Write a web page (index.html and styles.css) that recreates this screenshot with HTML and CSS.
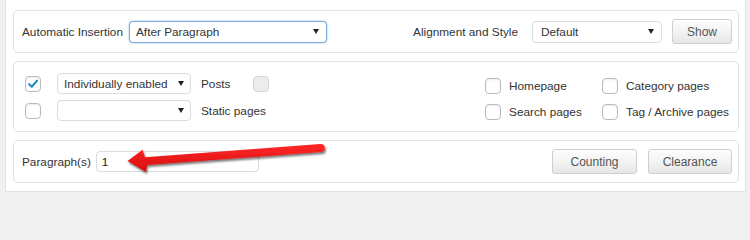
FILE: index.html
```html
<!DOCTYPE html>
<html>
<head>
<meta charset="utf-8">
<link rel="stylesheet" href="styles.css">
</head>
<body>
<div class="panel">
  <div class="box box-top">
    <div class="group">
      <span class="label">Automatic Insertion</span>
      <div class="select select-focus select-insert"><span>After Paragraph</span><i class="caret"></i></div>
    </div>
    <div class="group">
      <span class="label">Alignment and Style</span>
      <div class="select select-align"><span>Default</span><i class="caret"></i></div>
      <button class="btn btn-show">Show</button>
    </div>
  </div>

  <div class="box box-mid">
    <div class="left-rows">
      <div class="row">
        <span class="check checked"><svg viewBox="0 0 16 16" width="16" height="16"><path d="M3.6 8.2 L6.6 11.2 L12.6 4.2" fill="none" stroke="#1e8cbe" stroke-width="2.4" stroke-linecap="round" stroke-linejoin="round"/></svg></span>
        <div class="select select-type"><span>Individually enabled</span><i class="caret"></i></div>
        <span class="label row-label">Posts</span>
        <span class="check disabled"></span>
      </div>
      <div class="row">
        <span class="check"></span>
        <div class="select select-type"><span></span><i class="caret"></i></div>
        <span class="label row-label">Static pages</span>
      </div>
    </div>
    <div class="right-grid">
      <label class="opt"><span class="check"></span><span class="label">Homepage</span></label>
      <label class="opt"><span class="check"></span><span class="label">Category pages</span></label>
      <label class="opt"><span class="check"></span><span class="label">Search pages</span></label>
      <label class="opt"><span class="check"></span><span class="label">Tag / Archive pages</span></label>
    </div>
  </div>

  <div class="box box-bottom">
    <div class="group">
      <span class="label">Paragraph(s)</span>
      <div class="input">1</div>
    </div>
    <div class="group">
      <button class="btn btn-count">Counting</button>
      <button class="btn btn-clear">Clearance</button>
    </div>
  </div>
</div>

<svg class="red-arrow" viewBox="120 138 215 42" width="215" height="42">
  <defs>
    <linearGradient id="rg" x1="0" y1="0" x2="0" y2="1">
      <stop offset="0" stop-color="#ff2a2a"/>
      <stop offset="1" stop-color="#d60c0c"/>
    </linearGradient>
    <filter id="sh" x="-10%" y="-40%" width="120%" height="180%">
      <feDropShadow dx="1" dy="2" stdDeviation="1.3" flood-color="#000" flood-opacity="0.55"/>
    </filter>
  </defs>
  <path d="M127.5 161 L142.5 149.8 L145 157.3 L320 144 A4 4 0 0 1 321.5 152 L147 165 L146 172 Z" fill="url(#rg)" filter="url(#sh)"/>
</svg>
</body>
</html>
```

FILE: styles.css
```css
* { box-sizing: border-box; }

body {
  margin: 0;
  background: #f1f1f1;
  font-family: "Liberation Sans", Arial, sans-serif;
  font-size: 11.8px;
  color: #333;
  position: relative;
  width: 750px;
  height: 203px;
  overflow: hidden;
}

.panel {
  margin: 0 4px 0 5px;
  background: #fff;
  border: 1px solid #e3e3e3;
  border-top: none;
  padding: 10px 6px 8px 7px;
  display: flex;
  flex-direction: column;
  gap: 8px;
}

.box {
  border: 1px solid #e2e2e2;
  border-radius: 5px;
  background: #fff;
}

.box-top,
.box-bottom {
  height: 43px;
  display: flex;
  align-items: center;
  justify-content: space-between;
  padding: 0 6px 0 8px;
}

.group {
  display: flex;
  align-items: center;
}

.label {
  white-space: nowrap;
  color: #333;
}

.select {
  height: 22px;
  border: 1px solid #dcdcdc;
  border-radius: 4px;
  background: #fff;
  display: flex;
  align-items: center;
  justify-content: space-between;
  padding: 0 7px 0 6px;
  color: #333;
  white-space: nowrap;
}

.select-focus {
  border-color: #7aa7d6;
  box-shadow: 0 0 2px rgba(60, 130, 200, 0.6);
}

.caret {
  width: 0;
  height: 0;
  border-left: 3px solid transparent;
  border-right: 3px solid transparent;
  border-top: 5px solid #222;
}

.select-insert {
  width: 198px;
  margin-left: 6px;
}

.select-align {
  width: 130px;
  margin-left: 14px;
  padding-left: 8px;
}

.btn {
  height: 25px;
  border: 1px solid #cfcfcf;
  border-radius: 3px;
  background: linear-gradient(#fdfdfd, #f3f3f3 50%, #e6e6e6);
  color: #555;
  font-family: "Liberation Sans", Arial, sans-serif;
  font-size: 12px;
  padding: 0;
  box-shadow: inset 0 1px 0 #fff;
}

.btn-show {
  width: 60px;
  margin-left: 10px;
}

.btn-count {
  width: 85px;
}

.btn-clear {
  width: 84px;
  margin-left: 11px;
}

.box-mid {
  height: 71px;
  display: flex;
  justify-content: space-between;
  padding: 11px 9px 0 11px;
}

.left-rows {
  display: flex;
  flex-direction: column;
  gap: 6px;
}

.row {
  height: 21px;
  display: flex;
  align-items: center;
}

.select-type {
  width: 134px;
  height: 21px;
  margin-left: 16px;
  padding-right: 6px;
}

.row-label {
  margin-left: 10px;
}

.check {
  width: 16px;
  height: 16px;
  border: 1px solid #b9bcbf;
  border-radius: 4px;
  background: #fff;
  box-shadow: inset 0 1px 2px rgba(0, 0, 0, 0.08);
  display: inline-flex;
  align-items: center;
  justify-content: center;
  flex: none;
}

.check svg {
  display: block;
}

.check.disabled {
  margin-left: 22px;
  background: #ececec;
  border-color: #d6d6d6;
  box-shadow: none;
}

.right-grid {
  display: grid;
  grid-template-columns: 117px auto;
  grid-auto-rows: 21px;
  row-gap: 5px;
  padding-top: 2px;
}

.opt {
  display: flex;
  align-items: center;
  gap: 8px;
}

.input {
  width: 163px;
  height: 21px;
  margin-left: 5px;
  border: 1px solid #dcdcdc;
  border-radius: 4px;
  background: #fff;
  padding-left: 5px;
  display: flex;
  align-items: center;
  color: #222;
}

.red-arrow {
  position: absolute;
  left: 120px;
  top: 138px;
}
```
